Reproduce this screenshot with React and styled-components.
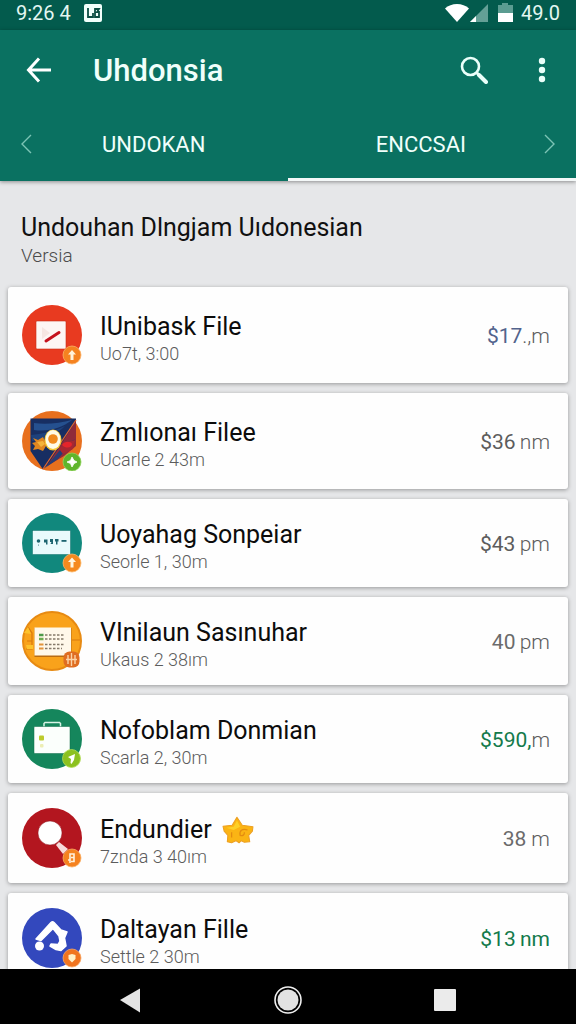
import styled, { createGlobalStyle } from "styled-components";

const GlobalStyle = createGlobalStyle`
* { box-sizing: border-box; }
body {
  margin: 0;
  font-family: Roboto, "Liberation Sans", sans-serif;
  background: #000;
}
button { font: inherit; }
`;

// icons inside the round avatars, all on a 60x60 grid

function UploadIcon() {
  return (
    <svg viewBox="0 0 60 60" width="60" height="60" aria-hidden="true">
      <circle cx="30" cy="30" r="30" fill="#e83a20" />
      <rect x="14" y="16" width="30" height="28" rx="1" fill="#fdf6f4" stroke="#c92c16" strokeWidth="0.6" />
      <path d="M20 22l8 6-8 6z" fill="#f6e6e2" />
      <path d="M24 36L37 27.500" stroke="#c5121d" strokeWidth="3" strokeLinecap="round" />
      <circle cx="50" cy="50" r="9" fill="#f58220" stroke="#f9b36a" strokeWidth="0.8" />
      <path d="M50 45l4 4.500h-2.500v5.500h-3v-5.500H46z" fill="#fff3dc" />
    </svg>
  );
}

function EggIcon() {
  return (
    <svg viewBox="0 0 60 60" width="60" height="60" aria-hidden="true">
      <circle cx="30" cy="30" r="30" fill="#e8701e" />
      <path d="M8.500 7.500H54V26L21 58.500 8.500 40z" fill="#172e62" />
      <path d="M12 12c12 2 26 0 38-3-10 8-24 12-38 10z" fill="#25508f" />
      <path d="M9 24c10-1 22-3 34-9-8 8-20 14-33 15z" fill="#1d417c" />
      <path d="M54 10v25L42 45l-17 10z" fill="#8f2a3a" />
      <path d="M54 9L21 58" stroke="#e8662a" strokeWidth="1.200" />
      <path d="M53 28L36 48l-13 9 15-18z" fill="#263c75" />
      <path d="M37 38l6-6 10-3-2 9-10 5z" fill="#a82731" />
      <path d="M11 27l5 2 5-3 2 4 4 2-3 3-3 5-5-2-5 1 2-4-3-3 4-1z" fill="#e0861f" />
      <path d="M15 31l6-1 2 3-4 3z" fill="#f5b43a" />
      <ellipse cx="31" cy="29" rx="8.500" ry="10.500" fill="#f4c735" />
      <ellipse cx="31" cy="28.500" rx="7.500" ry="9.500" fill="#fffbe6" />
      <circle cx="31" cy="28" r="4.800" fill="#f08a1d" />
      <path d="M40 34c2-4 9-4 10-1 0 4-6 5-10 1z" fill="#e4252b" />
      <circle cx="50" cy="51" r="9" fill="#5fb52c" stroke="#8ed25b" strokeWidth="0.800" />
      <path d="M50 46l2 3.500 3 1.500-3 1.500L50 56l-1.500-3.500L45 51l3.500-1.500z" fill="#fff" stroke="#fff" strokeWidth="0.800" />
    </svg>
  );
}

function CardIcon() {
  return (
    <svg viewBox="0 0 60 60" width="60" height="60" aria-hidden="true">
      <circle cx="30" cy="30" r="30" fill="#11887d" />
      <rect x="10.500" y="17.500" width="38" height="24" fill="#e9fafc" stroke="#0d6f68" strokeWidth="0.500" />
      <g fill="#1d6470">
        <circle cx="16.500" cy="28" r="1.800" />
        <path d="M22 26.500h3.500v5h-1.500v-2H22z" />
        <path d="M28 26h3v5h-2.500l1-2H28z" />
        <path d="M33 26h3.500v2.500h-1v3h-1.500v-3h-1z" />
        <path d="M39.500 27h5v1.800h-5z" />
      </g>
      <circle cx="16.500" cy="32" r="0.500" fill="#1d6470" />
      <circle cx="50" cy="50" r="9" fill="#f58a1f" stroke="#fbb869" strokeWidth="0.800" />
      <path d="M50 44.500l4 4.500h-2.500v5.500h-3V49H46z" fill="#fff6e0" />
    </svg>
  );
}

function SheetIcon() {
  return (
    <svg viewBox="0 0 60 60" width="60" height="60" aria-hidden="true">
      <circle cx="30" cy="30" r="29" fill="#f9a21b" stroke="#e78a12" strokeWidth="2" />
      <path d="M6 16l4 6v16H4M50 29h8M5 30h5" fill="none" stroke="#d97a0e" strokeWidth="1.200" />
      <path d="M2 22l4-6 3 7zM4 34h7v4H5z" fill="#fdc22c" />
      <rect x="12.500" y="17" width="37" height="29" fill="#b96c12" />
      <rect x="12.500" y="16.500" width="36.500" height="28" fill="#fff8ea" />
      <path d="M17 24h4.500" stroke="#4d9a4a" strokeWidth="2.500" />
      <path d="M17 28h4.500" stroke="#6cab4e" strokeWidth="2.500" />
      <path d="M17 33.500h4.500M17 37.500h4.500" stroke="#e2933b" strokeWidth="2.200" />
      <path d="M23 24h20M23 28h20M23 33.500h20M23 37.500h17" stroke="#85796a" strokeWidth="1.500" strokeDasharray="2.500 1.500" />
      <rect x="41.500" y="40.500" width="16" height="16" rx="6" fill="#df6d22" />
      <path d="M46 44v9M49.500 42v13M53 44v9M44 48.500h11" stroke="#fbd3a6" strokeWidth="1.400" />
    </svg>
  );
}

function CaseIcon() {
  return (
    <svg viewBox="0 0 60 60" width="60" height="60" aria-hidden="true">
      <circle cx="30" cy="30" r="30" fill="#15865c" />
      <path d="M22 18v-3.500l1-1h14.500l1 1V18" fill="none" stroke="#d8f3e5" strokeWidth="1.500" />
      <rect x="12" y="17.500" width="36" height="27" rx="1" fill="#fbfffc" stroke="#0d6947" strokeWidth="0.500" />
      <rect x="17" y="26.500" width="5" height="5" rx="1" fill="#bccb2c" />
      <rect x="18" y="35" width="3.500" height="3.500" rx="1" fill="#eceeb4" />
      <circle cx="49.500" cy="49.500" r="9" fill="#8cc11f" stroke="#b2dc58" strokeWidth="0.800" />
      <path d="M46 48l7-3-1 6-2.500 4-1-1 .500-4z" fill="#fff" />
    </svg>
  );
}

function LensIcon() {
  return (
    <svg viewBox="0 0 60 60" width="60" height="60" aria-hidden="true">
      <circle cx="30" cy="30" r="30" fill="#b3161f" />
      <circle cx="28" cy="25" r="12" fill="#fff" stroke="#8d0f18" strokeWidth="0.500" />
      <path d="M34 37l3-3 9 7-5 5z" fill="#f7dcdc" />
      <circle cx="50" cy="50" r="9" fill="#f5821f" stroke="#fab066" strokeWidth="0.800" />
      <path d="M48 55v-9h4v3.500h-3M52 49.500v4h-3M46 52h2" fill="none" stroke="#fff1dc" strokeWidth="1.600" />
    </svg>
  );
}

function RoofIcon() {
  return (
    <svg viewBox="0 0 60 60" width="60" height="60" aria-hidden="true">
      <circle cx="30" cy="30" r="30" fill="#3348bd" />
      <path
        d="M14 31L29 14.500q1.500-1.500 3 0L39 22l6 2-2.500 6 1.500 8-5 4.500-5-1-6-3.500 1-2 7 .500 2-3.500-1-5-6-7.500-12 12z"
        fill="#fff"
        stroke="#fff"
        strokeWidth="1.500"
        strokeLinejoin="round"
      />
      <circle cx="17.500" cy="38" r="4.500" fill="#fff" />
      <circle cx="50" cy="50" r="9" fill="#f1741f" stroke="#f8a765" strokeWidth="0.800" />
      <path d="M46.500 47l3.500-1 3.500 1v4L50 54.500 46.500 51z" fill="#fff0c9" />
    </svg>
  );
}

function StarIcon() {
  return (
    <svg viewBox="0 0 30 26" width="32" height="28" role="img" aria-label="star">
      <path
        d="M14 1l5 7.500 10 1.500-.500 4-3.500 4 1 6-5 .500-3-1.500-2 2-3-2-4 2-4-1 .500-6L2 14 1 9.500l8.500-1z"
        fill="#fbb414"
        stroke="#eda023"
        strokeWidth="1"
        strokeLinejoin="round"
      />
      <path d="M14 4l3 6-6 3-7-2 7-1z" fill="#fdd028" />
      <path d="M24 13c-5-2-8 1-7 5 3 1 4-1 4-3M9 15v5" fill="none" stroke="#e48c10" strokeWidth="1.200" />
    </svg>
  );
}

const files = [
  { id: 1, name: "IUnibask File", info: "Uo7t, 3:00", icon: UploadIcon, size: 96, price: "$17", tone: "#52638c", unit: ".,m" },
  { id: 2, name: "Zmlıonaı Filee", info: "Ucarle 2 43m", icon: EggIcon, size: 96, price: "$36", tone: "#5c5c5c", unit: "\u2009nm" },
  { id: 3, name: "Uoyahag Sonpeiar", info: "Seorle 1, 30m", icon: CardIcon, size: 88, price: "$43", tone: "#5c5c5c", unit: "\u2009pm" },
  { id: 4, name: "VInilaun Sasınuhar", info: "Ukaus 2 38ım", icon: SheetIcon, size: 88, price: "40", tone: "#6b6b6b", unit: "\u2009pm" },
  { id: 5, name: "Nofoblam Donmian", info: "Scarla 2, 30m", icon: CaseIcon, size: 88, price: "$590,", tone: "#137a4b", unit: "m" },
  { id: 6, name: "Endundier", info: "7znda 3 40ım", icon: LensIcon, size: 90, price: "38", tone: "#6b6b6b", unit: " m", star: true },
  { id: 7, name: "Daltayan Fille", info: "Settle 2 30m", icon: RoofIcon, size: 90, price: "$13\u2009nm", tone: "#137a4b", unit: "" },
];

function FileCard(props) {
  const { name, info, icon: Icon, size, price, tone, unit, star } = props.file;
  return (
    <Card $size={size}>
      <Icon />
      <CardText>
        <CardName>
          {name}
          {star && <StarIcon />}
        </CardName>
        <CardInfo>{info}</CardInfo>
      </CardText>
      <Price>
        <PriceValue $tone={tone}>{price}</PriceValue>
        {unit}
      </Price>
    </Card>
  );
}

function App() {
  return (
    <Screen>
      <GlobalStyle />
      <StatusBar>
        <StatusGroup $gap={13}>
          <span>9:26 4</span>
          <svg viewBox="0 0 18 18" width="18" height="18" aria-hidden="true">
            <rect width="18" height="18" rx="2" fill="#f1fffb" />
            <path d="M4 4v9h5V9.500M9 9v4M11 5h4l-2 3h2v5h-4V8z" fill="none" stroke="#0b4d42" strokeWidth="1.800" />
          </svg>
        </StatusGroup>
        <StatusGroup $gap={6}>
          <svg viewBox="0 0 70 20" width="70" height="20" aria-hidden="true">
            <path d="M0 5.500C6-.500 18-.500 24 5.500L12 19z" fill="#fff" />
            <path d="M43 1v18H25z" fill="#64a096" />
            <path d="M31 13v6h-6z" fill="#fff" />
            <path d="M53 2h4V0h6v2h5v8H53z" fill="#5b9c91" />
            <path d="M53 10h15v9H53z" fill="#fff" />
          </svg>
          <span>49.0</span>
        </StatusGroup>
      </StatusBar>

      <Header>
        <Toolbar>
          <IconButton aria-label="Back">
            <svg viewBox="0 0 26 26" width="26" height="26" fill="none" stroke="#fff" strokeWidth="3">
              <path d="M25 13H3M13 1.500L2.500 13 13 24.500" />
            </svg>
          </IconButton>
          <Title>Uhdonsia</Title>
          <IconButton aria-label="Search">
            <svg viewBox="0 0 28 28" width="28" height="28" fill="none" stroke="#eafffa">
              <circle cx="10.500" cy="10.500" r="8.500" strokeWidth="2.600" />
              <path d="M17 17l2 2" strokeWidth="3" />
              <path d="M19 19l7 7" strokeWidth="4" strokeLinecap="round" />
            </svg>
          </IconButton>
          <IconButton aria-label="More">
            <svg viewBox="0 0 8 26" width="8" height="26" fill="#eafffa">
              <circle cx="4" cy="4" r="3.200" />
              <circle cx="4" cy="13" r="3.200" />
              <circle cx="4" cy="22" r="3.200" />
            </svg>
          </IconButton>
        </Toolbar>
        <Tabs>
          <Arrow aria-label="Previous tab">
            <svg viewBox="0 0 12 20" width="12" height="20" fill="none" stroke="#7cc4b5" strokeWidth="1.400">
              <path d="M11 1L2 10l9 9" />
            </svg>
          </Arrow>
          <TabList role="tablist">
            <Tab role="tab" aria-selected="false">UNDOKAN</Tab>
            <Tab role="tab" aria-selected="true">ENCCSAI</Tab>
          </TabList>
          <Arrow aria-label="Next tab">
            <svg viewBox="0 0 12 20" width="12" height="20" fill="none" stroke="#7cc4b5" strokeWidth="1.400">
              <path d="M1 1l9 9-9 9" />
            </svg>
          </Arrow>
        </Tabs>
        <Indicator />
      </Header>

      <Content>
        <Heading>
          <HeadingTitle>Undouhan Dlngjam Uıdonesian</HeadingTitle>
          <HeadingSub>Versia</HeadingSub>
        </Heading>
        <List>
          {files.map((file) => (
            <FileCard key={file.id} file={file} />
          ))}
        </List>
      </Content>

      <NavBar>
        <NavButton aria-label="Back">
          <svg viewBox="0 0 28 28" width="28" height="28">
            <path d="M3 14L23 2.500v24z" fill="#e4e4e4" />
          </svg>
        </NavButton>
        <NavButton aria-label="Home">
          <svg viewBox="0 0 28 28" width="28" height="28">
            <circle cx="14" cy="14" r="13" fill="none" stroke="#eee" strokeWidth="1.600" />
            <circle cx="14" cy="14" r="10.500" fill="#e2e2e2" />
          </svg>
        </NavButton>
        <NavButton aria-label="Recent apps">
          <svg viewBox="0 0 28 28" width="28" height="28">
            <rect x="3" y="3" width="22" height="22" rx="1" fill="#ebebeb" />
          </svg>
        </NavButton>
      </NavBar>
    </Screen>
  );
}

export default App;

const Screen = styled.div`
display: flex;
flex-direction: column;
height: 100vh;
background: #e6e7e9;
`;

const StatusBar = styled.div`
display: flex;
flex-shrink: 0;
justify-content: space-between;
align-items: center;
height: 30px;
padding: 0 16px 4px;
color: #e3f7f2;
font-size: 20px;
line-height: 24px;
background: #035b4d;
`;

const StatusGroup = styled.div`
display: flex;
align-items: center;
gap: ${(props) => props.$gap}px;
`;

const Header = styled.header`
flex-shrink: 0;
color: #f0fffb;
background: #0a7161;
box-shadow: 0 1px 4px rgba(0, 0, 0, 0.4);
`;

const Toolbar = styled.div`
display: flex;
align-items: center;
height: 80px;
padding: 0 14px 0 19px;
`;

const IconButton = styled.button`
display: flex;
justify-content: center;
align-items: center;
width: 40px;
height: 48px;
padding: 0;
border: 0;
background: none;

& + & {
  margin-left: 28px;
}
`;

const Title = styled.h1`
flex: 1;
margin: 0;
padding: 2px 0 0 34px;
font-size: 31px;
font-weight: 500;
line-height: 36px;
`;

const Tabs = styled.div`
display: flex;
align-items: center;
height: 68px;
`;

const Arrow = styled.button`
display: flex;
justify-content: center;
align-items: center;
width: 52px;
height: 48px;
padding: 0;
border: 0;
background: none;
`;

const TabList = styled.div`
display: flex;
flex: 1;
justify-content: space-between;
padding: 2px 50px 0 42px;
`;

const Tab = styled.button`
padding: 8px;
border: 0;
color: inherit;
background: none;
font-size: 22px;
line-height: 28px;
`;

const Indicator = styled.div`
width: 50%;
height: 3px;
margin-left: auto;
background: #f4f8f8;
`;

const Content = styled.main`
flex: 1;
min-height: 0;
padding: 0 8px;
overflow-y: auto;
scrollbar-width: none;
`;

const Heading = styled.div`
padding: 32px 13px 18px;
`;

const HeadingTitle = styled.h2`
margin: 0;
color: #111;
font-size: 25px;
font-weight: 400;
line-height: 30px;
`;

const HeadingSub = styled.p`
margin: 0;
color: #4c4c4c;
font-size: 19px;
font-weight: 300;
line-height: 26px;
`;

const List = styled.ul`
display: flex;
flex-direction: column;
gap: 10px;
margin: 0;
padding: 0;
`;

const Card = styled.li`
display: flex;
align-items: center;
min-height: ${(props) => props.$size}px;
padding: 0 18px 0 14px;
background: #fefefe;
border-radius: 3px;
box-shadow: 0 1px 4px rgba(0, 0, 0, 0.35);
`;

const CardText = styled.div`
flex: 1;
padding: 8px 0 0 18px;
`;

const CardName = styled.h3`
display: flex;
align-items: center;
gap: 10px;
margin: 0;
color: #0c0c0c;
font-size: 25px;
font-weight: 400;
line-height: 30px;
`;

const CardInfo = styled.p`
margin: 0;
color: #5c5c5c;
font-size: 18px;
font-weight: 300;
line-height: 24px;
`;

const Price = styled.span`
padding-top: 2px;
color: #5c5c5c;
font-size: 21px;
font-weight: 300;
line-height: 26px;
white-space: pre;
`;

const PriceValue = styled.span`
color: ${(props) => props.$tone};
font-weight: 400;
`;

const NavBar = styled.nav`
display: flex;
flex-shrink: 0;
justify-content: center;
gap: 109px;
height: 55px;
background: #000;
`;

const NavButton = styled.button`
display: flex;
justify-content: center;
align-items: center;
width: 48px;
padding: 6px 0 0;
border: 0;
background: none;
`;
